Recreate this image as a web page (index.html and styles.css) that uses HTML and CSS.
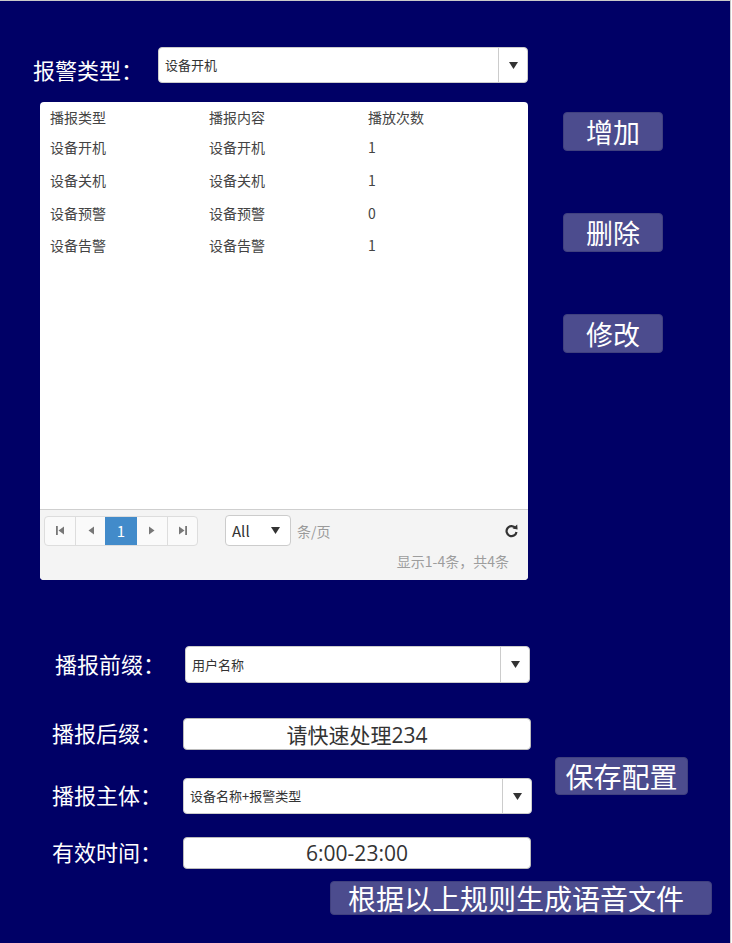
FILE: index.html
```html
<!DOCTYPE html>
<html lang="zh-CN">
<head>
<meta charset="utf-8">
<title>语音播报配置</title>
<link rel="stylesheet" href="styles.css">
</head>
<body>
<div class="page">
  <div class="top-row">
    <div class="label top-label">报警类型：</div>
    <div class="select sel-type">
      <span class="sel-text">设备开机</span>
      <span class="sel-arrow"><svg width="9" height="7" viewBox="0 0 9 7"><polygon points="0,0 9,0 4.5,7" fill="#333"/></svg></span>
    </div>
  </div>

  <div class="main-row">
    <div class="panel">
      <div class="table-body">
        <div class="t-row t-head"><span>播报类型</span><span>播报内容</span><span>播放次数</span></div>
        <div class="t-row"><span>设备开机</span><span>设备开机</span><span>1</span></div>
        <div class="t-row"><span>设备关机</span><span>设备关机</span><span>1</span></div>
        <div class="t-row"><span>设备预警</span><span>设备预警</span><span>0</span></div>
        <div class="t-row"><span>设备告警</span><span>设备告警</span><span>1</span></div>
      </div>
      <div class="panel-foot">
        <div class="foot-line">
          <div class="pager">
            <span class="pg-btn"><svg width="9" height="9" viewBox="0 0 9 9"><rect x="0" y="0" width="1.8" height="9" fill="#777"/><polygon points="8,0.5 8,8.5 2.5,4.5" fill="#777"/></svg></span>
            <span class="pg-btn"><svg width="6" height="9" viewBox="0 0 6 9"><polygon points="6,0.5 6,8.5 0.5,4.5" fill="#777"/></svg></span>
            <span class="pg-btn pg-active">1</span>
            <span class="pg-btn"><svg width="6" height="9" viewBox="0 0 6 9"><polygon points="0,0.5 0,8.5 5.5,4.5" fill="#777"/></svg></span>
            <span class="pg-btn"><svg width="9" height="9" viewBox="0 0 9 9"><polygon points="1,0.5 1,8.5 6.5,4.5" fill="#777"/><rect x="7.2" y="0" width="1.8" height="9" fill="#777"/></svg></span>
          </div>
          <div class="page-size">
            <span>All</span>
            <svg width="9" height="7" viewBox="0 0 9 7"><polygon points="0,0 9,0 4.5,7" fill="#333"/></svg>
          </div>
          <span class="per">条/页</span>
          <svg class="refresh" width="13" height="14" viewBox="0 0 13 14"><path d="M10.6 4.2 A5 5 0 1 0 11.5 8" fill="none" stroke="#333" stroke-width="2.2"/><polygon points="7.6,4.6 12.6,5.4 12.2,0.4" fill="#333"/></svg>
        </div>
        <div class="summary">显示1-4条，共4条</div>
      </div>
    </div>
    <div class="actions">
      <button class="btn btn-side">增加</button>
      <button class="btn btn-side">删除</button>
      <button class="btn btn-side">修改</button>
    </div>
  </div>

  <div class="form">
    <div class="label f-label r1 first">播报前缀：</div>
    <div class="select f-sel1 r1">
      <span class="sel-text">用户名称</span>
      <span class="sel-arrow"><svg width="9" height="7" viewBox="0 0 9 7"><polygon points="0,0 9,0 4.5,7" fill="#333"/></svg></span>
    </div>

    <div class="label f-label r2">播报后缀：</div>
    <div class="input r2">请快速处理234</div>

    <div class="label f-label r3">播报主体：</div>
    <div class="select f-sel3 r3">
      <span class="sel-text">设备名称+报警类型</span>
      <span class="sel-arrow"><svg width="9" height="7" viewBox="0 0 9 7"><polygon points="0,0 9,0 4.5,7" fill="#333"/></svg></span>
    </div>

    <button class="btn btn-save">保存配置</button>

    <div class="label f-label r4">有效时间：</div>
    <div class="input r4">6:00-23:00</div>

    <button class="btn btn-gen">根据以上规则生成语音文件</button>
  </div>
</div>
</body>
</html>
```

FILE: styles.css
```css
* { box-sizing: border-box; }
html, body {
  margin: 0;
  padding: 0;
  background: #ffffff;
}
body {
  font-family: "Noto Sans CJK SC", "Noto Sans", sans-serif;
  width: 732px;
  height: 943px;
  overflow: hidden;
}
.page {
  width: 731px;
  height: 943px;
  background: #000066;
  border-top: 1px solid #c9c9c9;
  border-right: 1px solid #c9c9c9;
}
.label {
  color: #ffffff;
  font-size: 22px;
  line-height: 33px;
  white-space: nowrap;
}

/* top row */
.top-row {
  display: flex;
  align-items: flex-start;
  padding: 46px 0 0 33px;
}
.top-label {
  width: 125px;
  line-height: 24px;
  margin-top: 10px;
}
.select {
  display: flex;
  align-items: stretch;
  background: #fff;
  border: 1px solid #cccccc;
  border-radius: 4px;
  color: #333;
  font-size: 13px;
}
.sel-text {
  flex: 1;
  display: flex;
  align-items: center;
  padding-left: 6px;
  padding-bottom: 1px;
}
.sel-arrow {
  width: 29px;
  border-left: 1px solid #cccccc;
  display: flex;
  align-items: center;
  justify-content: center;
}
.sel-type {
  width: 370px;
  height: 36px;
}

/* main row */
.main-row {
  display: flex;
  align-items: flex-start;
  margin-top: 19px;
  padding-left: 40px;
}
.panel {
  width: 488px;
  height: 478px;
  background: #fff;
  border-radius: 4px;
  display: flex;
  flex-direction: column;
  overflow: hidden;
}
.table-body {
  height: 407px;
  padding: 0 10px;
}
.t-row {
  display: grid;
  grid-template-columns: 159px 159px 1fr;
  height: 32.67px;
  align-items: center;
  font-size: 14px;
  color: #444;
}
.t-head {
  height: 29px;
  padding-top: 1px;
}
.panel-foot {
  flex: 1;
  background: #f4f4f4;
  border-top: 1px solid #cfcfcf;
  padding: 5px 10px 0 4px;
}
.foot-line {
  display: flex;
  align-items: center;
  height: 31px;
}
.pager {
  display: flex;
  height: 30px;
  border: 1px solid #dddddd;
  border-radius: 4px;
  overflow: hidden;
  background: #fafafa;
}
.pg-btn {
  width: 30px;
  display: flex;
  align-items: center;
  justify-content: center;
  border-left: 1px solid #dddddd;
}
.pg-btn:first-child { border-left: none; width: 30px; }
.pg-active {
  width: 32px;
  background: #428bca;
  border-left: none;
  color: #fff;
  font-size: 15px;
}
.pg-active + .pg-btn { border-left: none; }
.page-size {
  margin-left: 27px;
  width: 66px;
  height: 31px;
  border: 1px solid #cccccc;
  border-radius: 4px;
  background: #fff;
  display: flex;
  align-items: center;
  justify-content: space-between;
  padding: 0 10px 0 6px;
  font-size: 15px;
  color: #333;
}
.per {
  margin-left: 6px;
  font-size: 14px;
  color: #9a9a9a;
}
.refresh {
  margin-left: auto;
}
.summary {
  text-align: right;
  padding-right: 9px;
  margin-top: 5px;
  font-size: 14px;
  color: #9d9d9d;
  line-height: 20px;
}

/* buttons */
.btn {
  background: #4c4c8e;
  border: 1px solid #40407f;
  border-radius: 4px;
  color: #fff;
  font-family: "Noto Sans CJK SC", "Noto Sans", sans-serif;
  font-size: 28px;
  line-height: 1;
  padding: 0;
  display: flex;
  align-items: center;
  justify-content: center;
}
.actions {
  display: flex;
  flex-direction: column;
  margin-left: 35px;
  padding-top: 10px;
  gap: 62px;
}
.btn-side {
  width: 100px;
  height: 39px;
  font-size: 27px;
}

/* form */
.form {
  display: grid;
  grid-template-columns: 131px 348px 1fr;
  grid-template-rows: 37px 35px 32px 28px 36px 23px 32px 12px 34px;
  margin-top: 66px;
  padding-left: 52px;
}
.f-label {
  grid-column: 1;
  align-self: center;
  margin-top: -3px;
}
.f-label.first { padding-left: 3px; }
.r1 { grid-row: 1; }
.r2 { grid-row: 3; }
.r3 { grid-row: 5; }
.r4 { grid-row: 7; }
.select.r1, .select.r3, .input { grid-column: 2; }
.f-sel1 {
  margin-left: 2px;
  width: 345px;
  height: 37px;
}
.f-sel3 {
  width: 349px;
  height: 36px;
}
.input {
  background: #fff;
  border: 1px solid #bbbbbb;
  border-radius: 4px;
  font-family: "Open Sans", "Noto Sans CJK SC", sans-serif;
  font-size: 21px;
  color: #333;
  display: flex;
  align-items: center;
  justify-content: center;
  height: 32px;
}
.btn-save {
  grid-column: 3;
  grid-row: 3 / 6;
  align-self: start;
  margin-top: 39px;
  margin-left: 24px;
  width: 133px;
  height: 38px;
}
.btn-gen {
  grid-column: 2 / 4;
  grid-row: 9;
  margin-left: 147px;
  width: 382px;
  height: 34px;
  padding-right: 10px;
}
```
